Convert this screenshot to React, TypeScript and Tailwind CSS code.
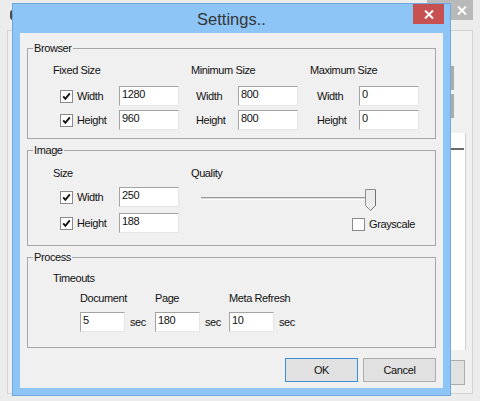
import React from "react";

function Check({ checked }: { checked: boolean }) {
  return (
    <div className="w-[13px] h-[13px] shrink-0 border border-[#8a8a8a] bg-white flex items-center justify-center">
      {checked && (
        <svg width="11" height="11" viewBox="0 0 11 11">
          <path d="M2.2 5.3 L4.4 7.8 L8.8 2.4" fill="none" stroke="#141414" strokeWidth="1.9" />
        </svg>
      )}
    </div>
  );
}

function TextBox({ value, className }: { value: string; className: string }) {
  return (
    <div
      className={`h-[20px] shrink-0 bg-white border border-t-[#a3a3a3] border-l-[#a3a3a3] border-r-[#e6e6e6] border-b-[#e6e6e6] pl-[2px] leading-[15px] ${className}`}
    >
      {value}
    </div>
  );
}

function Group({ title, className, children }: { title: string; className?: string; children: React.ReactNode }) {
  return (
    <div className={`relative border border-[#a7a7a7] ${className ?? ""}`}>
      <span className="absolute left-[5px] top-[-8px] bg-[#f0f0f0] px-[1px] leading-[14px]">{title}</span>
      {children}
    </div>
  );
}

function CheckRow({ label, value }: { label: string; value: string }) {
  return (
    <div className="flex items-center h-[20px]">
      <div className="ml-[7px]">
        <Check checked />
      </div>
      <span className="ml-[4px] w-[42px] leading-[14px]">{label}</span>
      <TextBox value={value} className="w-[60px]" />
    </div>
  );
}

function PlainRow({ label, value, labelIndent }: { label: string; value: string; labelIndent: "a" | "b" }) {
  return (
    <div className="flex items-center h-[20px]">
      <span className={`${labelIndent === "a" ? "ml-[5px]" : "ml-[7px]"} w-[42px] leading-[14px]`}>{label}</span>
      <TextBox value={value} className="w-[60px]" />
    </div>
  );
}

function BackgroundWindow() {
  return (
    <>
      {/* window icon of the background window */}
      <div className="absolute left-[10px] top-[10px] w-[6px] h-[10px] rounded-l-[3px] bg-[#4b4b4b]" />
      {/* client area frame */}
      <div className="absolute left-[7px] top-[30px] w-[466px] h-[364px] border border-[#d4d4d4] bg-[#f0f0f0]" />
      {/* close button of background window */}
      <div className="absolute left-[427px] top-0 w-[46px] h-[20px] bg-[#b9b9b9] flex items-center justify-end pr-[6px]">
        <svg width="10" height="9" viewBox="0 0 10 9">
          <path d="M1 0.5 L9 8.5 M9 0.5 L1 8.5" stroke="#ffffff" strokeWidth="2" />
        </svg>
      </div>
      {/* pieces of controls peeking out at the right */}
      <div className="absolute left-[451px] top-[66px] w-[3px] h-[24px] bg-[#acacac]" />
      <div className="absolute left-[451px] top-[94px] w-[3px] h-[24px] bg-[#acacac]" />
      <div className="absolute left-[440px] top-[133px] w-[26px] h-[217px] bg-white border-r border-[#d0d0d0]">
        <div className="mt-[15px] h-[2px] bg-[#6a6a6a] mr-[1px]" />
      </div>
      <div className="absolute left-[430px] top-[360px] w-[35px] h-[25px] bg-[#e1e1e1] border border-[#adadad]" />
    </>
  );
}

export default function App() {
  return (
    <div className="relative w-[480px] h-[401px] overflow-hidden bg-[#ececec] font-['Liberation_Sans',Arial,sans-serif] text-[11px] tracking-[-0.4px] text-[#111111]">
      <BackgroundWindow />

      {/* Settings dialog */}
      <div className="absolute left-[12px] top-[3px] w-[439px] h-[393px] border border-[#6ea8dc] bg-[#8dc5f7] flex flex-col">
        <div className="relative h-[29px] shrink-0 flex items-center justify-center">
          <span className="text-[16.5px] tracking-normal text-[#353535] leading-[20px] mt-[1px]">Settings..</span>
          <div className="absolute right-[6px] top-0 w-[31px] h-[20px] bg-[#c75050] flex items-center justify-center">
            <svg width="10" height="9" viewBox="0 0 10 9">
              <path d="M1 0.5 L9 8.5 M9 0.5 L1 8.5" stroke="#ffffff" strokeWidth="2" />
            </svg>
          </div>
        </div>

        <div className="mx-[7px] mb-[7px] flex-1 bg-[#f0f0f0] px-[7px] pt-[15px] flex flex-col">
          {/* Browser */}
          <Group title="Browser">
            <div className="flex pl-[25px] pt-[14px] pb-[8px]">
              <div className="w-[138px]">
                <div className="leading-[14px] h-[14px]">Fixed Size</div>
                <div className="mt-[9px] flex flex-col gap-[4px]">
                  <CheckRow label="Width" value="1280" />
                  <CheckRow label="Height" value="960" />
                </div>
              </div>
              <div className="w-[119px]">
                <div className="leading-[14px] h-[14px]">Minimum Size</div>
                <div className="mt-[9px] flex flex-col gap-[4px]">
                  <PlainRow label="Width" value="800" labelIndent="a" />
                  <PlainRow label="Height" value="800" labelIndent="a" />
                </div>
              </div>
              <div className="flex-1">
                <div className="leading-[14px] h-[14px]">Maximum Size</div>
                <div className="mt-[9px] flex flex-col gap-[4px]">
                  <PlainRow label="Width" value="0" labelIndent="b" />
                  <PlainRow label="Height" value="0" labelIndent="b" />
                </div>
              </div>
            </div>
          </Group>

          {/* Image */}
          <Group title="Image" className="mt-[11px]">
            <div className="flex pl-[25px] pt-[15px] pb-[12px]">
              <div className="w-[138px]">
                <div className="leading-[14px] h-[14px]">Size</div>
                <div className="mt-[7px] flex flex-col gap-[6px]">
                  <CheckRow label="Width" value="250" />
                  <CheckRow label="Height" value="188" />
                </div>
              </div>
              <div className="flex-1">
                <div className="leading-[14px] h-[14px]">Quality</div>
                <div className="relative ml-[10px] mt-[9px] w-[176px] h-[22px]">
                  <div className="absolute left-0 right-[5px] top-[8px] h-[3px] border-t border-[#9a9a9a] bg-[#d9d9d9] border-b border-b-white" />
                  <svg className="absolute left-[164px] top-0" width="12" height="23" viewBox="0 0 12 23">
                    <polygon points="0.5,0.5 10.5,0.5 10.5,16.5 5.5,21.5 0.5,16.5" fill="#ececec" stroke="#8e8e8e" />
                    <polyline points="10.5,1 10.5,16.5 5.5,21.5" fill="none" stroke="#707070" />
                  </svg>
                </div>
                <div className="flex items-center ml-[161px] mt-[6px]">
                  <Check checked={false} />
                  <span className="ml-[4px] leading-[14px]">Grayscale</span>
                </div>
              </div>
            </div>
          </Group>

          {/* Process */}
          <Group title="Process" className="mt-[11px]">
            <div className="pl-[25px] pt-[13px] pb-[15px]">
              <div className="leading-[14px] h-[14px]">Timeouts</div>
              <div className="ml-[27px] mt-[6px] flex">
                {[
                  { label: "Document", value: "5", w: "w-[75px]" },
                  { label: "Page", value: "180", w: "w-[74px]" },
                  { label: "Meta Refresh", value: "10", w: "w-[80px]" },
                ].map((c) => (
                  <div key={c.label} className={c.w}>
                    <div className="leading-[14px] h-[14px] whitespace-nowrap">{c.label}</div>
                    <div className="mt-[7px] flex items-center">
                      <TextBox value={c.value} className="w-[45px]" />
                      <span className="ml-[5px] leading-[14px]">sec</span>
                    </div>
                  </div>
                ))}
              </div>
            </div>
          </Group>

          {/* Buttons */}
          <div className="mt-[10px] flex justify-end gap-[5px]">
            <div className="w-[73px] h-[24px] border border-[#3c8fd8] bg-[#e1e1e1] flex items-center justify-center leading-[14px]">
              OK
            </div>
            <div className="w-[73px] h-[24px] border border-[#adadad] bg-[#e1e1e1] flex items-center justify-center leading-[14px]">
              Cancel
            </div>
          </div>
        </div>
      </div>
    </div>
  );
}
